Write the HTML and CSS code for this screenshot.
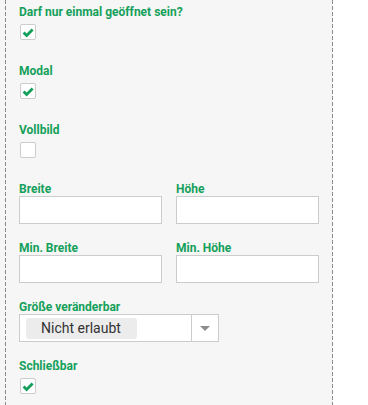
FILE: index.html
```html
<!DOCTYPE html>
<html lang="de">
<head>
  <meta charset="UTF-8">
  <title>Fenster-Einstellungen</title>
  <link rel="stylesheet" href="styles.css">
</head>
<body>
  <div class="page">
    <div class="panel">
      <div class="field">
        <label class="field-label">Darf nur einmal geöffnet sein?</label>
        <span class="checkbox checked">
          <svg viewBox="0 0 12 12" width="12" height="12"><path d="M0.6 6.6 L2.6 4.6 L4.6 6.4 L9.6 1.6 L11.6 3.6 L4.6 10.4 Z" /></svg>
        </span>
      </div>

      <div class="field">
        <label class="field-label">Modal</label>
        <span class="checkbox checked">
          <svg viewBox="0 0 12 12" width="12" height="12"><path d="M0.6 6.6 L2.6 4.6 L4.6 6.4 L9.6 1.6 L11.6 3.6 L4.6 10.4 Z" /></svg>
        </span>
      </div>

      <div class="field">
        <label class="field-label">Vollbild</label>
        <span class="checkbox"></span>
      </div>

      <div class="field-row">
        <div class="field input-field">
          <label class="field-label">Breite</label>
          <input type="text" class="text-input">
        </div>
        <div class="field input-field">
          <label class="field-label">Höhe</label>
          <input type="text" class="text-input">
        </div>
      </div>

      <div class="field-row">
        <div class="field input-field">
          <label class="field-label">Min. Breite</label>
          <input type="text" class="text-input">
        </div>
        <div class="field input-field">
          <label class="field-label">Min. Höhe</label>
          <input type="text" class="text-input">
        </div>
      </div>

      <div class="field input-field">
        <label class="field-label">Größe veränderbar</label>
        <div class="select">
          <div class="select-value">
            <span class="chip">Nicht erlaubt</span>
          </div>
          <div class="select-toggle"><span class="caret"></span></div>
        </div>
      </div>

      <div class="field">
        <label class="field-label">Schließbar</label>
        <span class="checkbox checked">
          <svg viewBox="0 0 12 12" width="12" height="12"><path d="M0.6 6.6 L2.6 4.6 L4.6 6.4 L9.6 1.6 L11.6 3.6 L4.6 10.4 Z" /></svg>
        </span>
      </div>
    </div>
  </div>
</body>
</html>
```

FILE: styles.css
```css
:root {
  --green: #14a05a;
  --panel-bg: #f6f6f6;
  --border: #cccccc;
  --dash: #8a8a8a;
  --text: #333333;
}

* {
  margin: 0;
  padding: 0;
  box-sizing: border-box;
}

body {
  background: #ffffff;
  font-family: Roboto, "Liberation Sans", sans-serif;
  height: 405px;
  overflow: hidden;
}

.page {
  width: 333px;
  height: 405px;
  padding-left: 5px;
  background: var(--panel-bg);
}

/* dashed side edges, 4px dash / 2px gap */
.panel {
  height: 100%;
  padding: 5px 0 0 14px;
  background:
    repeating-linear-gradient(to bottom, var(--dash) 0 4px, transparent 4px 6px) left top / 1px 100% no-repeat,
    repeating-linear-gradient(to bottom, var(--dash) 0 4px, transparent 4px 6px) right top / 1px 100% no-repeat;
}

.field {
  display: flex;
  flex-direction: column;
  align-items: flex-start;
  margin-bottom: 24px;
}

.field-label {
  font-size: 12px;
  line-height: 14px;
  font-weight: 700;
  color: var(--green);
}

.checkbox {
  width: 16px;
  height: 16px;
  margin-top: 5px;
  margin-left: 1px;
  background: #ffffff;
  border: 1px solid var(--border);
  border-radius: 2px;
  display: flex;
  align-items: center;
  justify-content: center;
}

.checkbox svg {
  margin-top: 1px;
}

.checkbox svg path {
  fill: var(--green);
}

.field-row {
  display: grid;
  grid-template-columns: 143px 143px;
  column-gap: 14px;
}

.input-field {
  align-items: stretch;
  margin-bottom: 17px;
}

.text-input {
  height: 28px;
  border: 1px solid var(--border);
  background: #ffffff;
  font-size: 14px;
  padding: 0 6px;
}

.select {
  display: flex;
  width: 200px;
  height: 28px;
  background: #ffffff;
  border: 1px solid var(--border);
}

.select-value {
  flex: 1;
  display: flex;
  align-items: center;
  padding-left: 6px;
  border-right: 1px solid var(--border);
}

.chip {
  background: #ececec;
  border-radius: 3px;
  height: 21px;
  width: 111px;
  padding-left: 15px;
  font-size: 14px;
  line-height: 21px;
  color: var(--text);
}

.select-toggle {
  width: 26px;
  display: flex;
  align-items: center;
  justify-content: center;
}

.caret {
  width: 0;
  height: 0;
  border-left: 5px solid transparent;
  border-right: 5px solid transparent;
  border-top: 5px solid #8c8c8c;
}
```
